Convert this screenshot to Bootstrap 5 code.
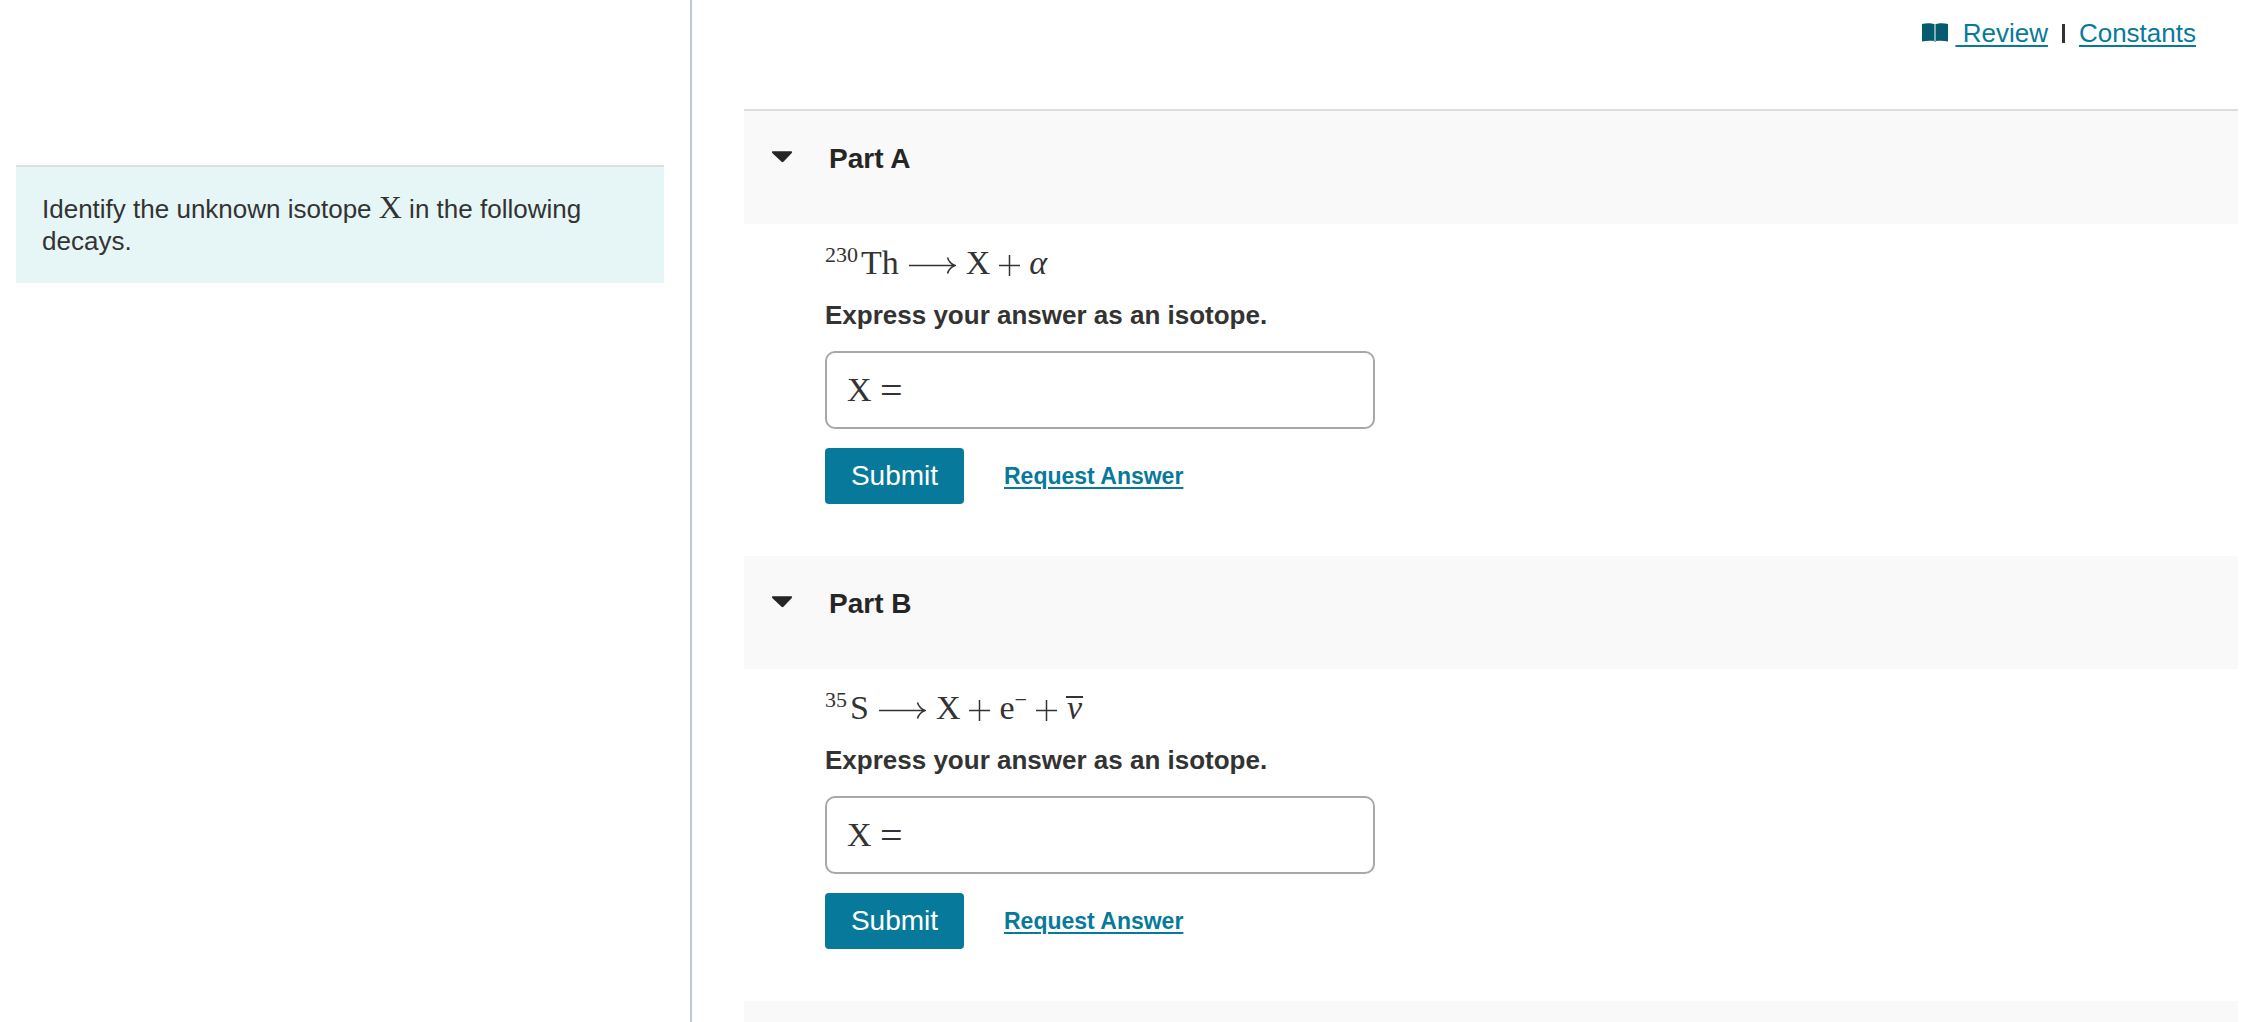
<!DOCTYPE html>
<html lang="en">
<head>
<meta charset="utf-8">
<meta name="viewport" content="width=device-width, initial-scale=1">
<title>Unknown isotope decays</title>
<link href="https://cdn.jsdelivr.net/npm/bootstrap@5.3.0/dist/css/bootstrap.min.css" rel="stylesheet">
<style>
  body { font-family: "Liberation Sans", Arial, sans-serif; font-size: 26px; line-height: 32px; color: #333; background: #fff; }
  a { color: #077a9c; text-decoration-thickness: 2px; text-underline-offset: 3px; }
  .intro-pane { flex: 0 0 692px; border-right: 2px solid #b9c8de; padding: 165px 26px 0 16px; }
  .intro-box { background: #e6f6f6; border-top: 2px solid #dcdfdf; padding: 26px; }
  .work-pane { padding: 0 12px 0 52px; }
  .top-links { height: 109px; padding: 17px 42px 0 0; }
  .book-icon { width: 26px; height: 20px; margin-right: 7px; }
  .link-bar { width: 3px; height: 19px; background: #333; margin: 0 14px; }
  .part-head { background: #f9f9f9; height: 113px; padding: 30px 28px 0; gap: 35px; color: #252525; }
  .first-head { border-top: 2px solid #ddd; height: 115px; }
  .caret { width: 21px; height: 12px; margin-top: 10px; margin-right: 1px; }
  .part-title { font-size: 28px; line-height: 36px; }
  .part-body { padding: 23px 0 52px 81px; }
  .formula { font-family: "Liberation Serif", "Times New Roman", serif; font-size: 34px; line-height: 32px; white-space: nowrap; }
  .intro-box .formula { font-size: 32px; line-height: 1px; }
  .formula sup { font-size: 22px; line-height: 0; top: 0; vertical-align: 12px; }
  .pre-sup { margin-right: 3px; }
  .arrow { width: 47px; height: 17px; margin: 0 10px; vertical-align: 0; }
  .plus { width: 21px; height: 21px; margin: 0 9px; vertical-align: -2px; }
  .equals { font-size: 40px; line-height: 0; vertical-align: -3px; }
  .bar-over { display: inline-block; border-top: 2px solid #333; line-height: 20px; height: 22px; padding: 0 1px; }
  .prompt { margin-top: 20px; line-height: 32px; }
  .answer-box { max-width: 550px; height: 78px; border: 2px solid #a8a8a8; border-radius: 10px; margin-top: 20px; padding: 0 20px; }
  .answer-box input { border: 0; outline: 0; background: transparent; font-size: 26px; min-width: 0; }
  .actions { margin-top: 19px; gap: 40px; }
  .btn-send { background: #077a9c; color: #fff; border: 0; border-radius: 4px; font-size: 28px; line-height: 32px; width: 139px; height: 56px; padding: 0; }
  .btn-send:hover { background: #055f7a; color: #fff; }
  .ask-link { font-size: 23px; font-weight: 700; }
  .next-head { min-height: 20px; background: #f9f9f9; }
</style>
</head>
<body>
<div class="d-flex min-vh-100">
  <aside class="intro-pane">
    <div class="intro-box">Identify the unknown isotope <span class="formula">X</span> in the following decays.</div>
  </aside>

  <main class="work-pane flex-fill d-flex flex-column">
    <nav class="top-links d-flex justify-content-end align-items-start" aria-label="Resources">
      <div class="d-flex align-items-center">
        <svg class="book-icon" viewBox="0 0 26 20" aria-hidden="true">
          <path fill="#045a6e" d="M0 1C4 0 9 0 12 1V18C9 17.500 4 17.500 0 18.500ZM14 1C17 0 22 0 26 1V18.500C22 17.500 17 17.500 14 18Z"/>
          <path fill="#7fb0bc" d="M12 1h2v17.500l-1 1-1-1z"/>
        </svg>
        <a href="#review">&nbsp;Review</a>
        <span class="link-bar"></span>
        <a href="#constants">Constants</a>
      </div>
    </nav>

    <section>
      <header class="part-head first-head d-flex align-items-start">
        <svg class="caret" viewBox="0 0 22 12" aria-hidden="true"><path fill="#252525" d="M1 0H20Q22 0 20.500 2L12 11Q11 12 10 11L.5 2Q-1 0 1 0Z"/></svg>
        <h2 class="part-title fw-bold m-0">Part A</h2>
      </header>
      <div class="part-body">
        <div class="formula"><sup class="pre-sup">230</sup>Th<svg class="arrow" viewBox="0 0 47 17" role="img" aria-label="decays to"><path d="M0 8.500H45M38.500 .5Q40 6 46 8.500Q40 11 38.500 16.500" fill="none" stroke="#333" stroke-width="1.500"/></svg>X<svg class="plus" viewBox="0 0 21 21" role="img" aria-label="plus"><path d="M0 10.500H21M10.500 0V21" stroke="#333" stroke-width="1.500"/></svg><i>α</i></div>
        <div class="prompt fw-bold">Express your answer as an isotope.</div>
        <div class="answer-box d-flex align-items-center">
          <label class="formula" for="answer-a">X <span class="equals">=</span></label>
          <input class="flex-fill" id="answer-a" type="text" autocomplete="off">
        </div>
        <div class="actions d-flex align-items-center">
          <button class="btn btn-send" type="button">Submit</button>
          <a class="ask-link" href="#request-a">Request Answer</a>
        </div>
      </div>
    </section>

    <section>
      <header class="part-head d-flex align-items-start">
        <svg class="caret" viewBox="0 0 22 12" aria-hidden="true"><path fill="#252525" d="M1 0H20Q22 0 20.500 2L12 11Q11 12 10 11L.5 2Q-1 0 1 0Z"/></svg>
        <h2 class="part-title fw-bold m-0">Part B</h2>
      </header>
      <div class="part-body">
        <div class="formula"><sup class="pre-sup">35</sup>S<svg class="arrow" viewBox="0 0 47 17" role="img" aria-label="decays to"><path d="M0 8.500H45M38.500 .5Q40 6 46 8.500Q40 11 38.500 16.500" fill="none" stroke="#333" stroke-width="1.500"/></svg>X<svg class="plus" viewBox="0 0 21 21" role="img" aria-label="plus"><path d="M0 10.500H21M10.500 0V21" stroke="#333" stroke-width="1.500"/></svg>e<sup>−</sup><svg class="plus" viewBox="0 0 21 21" role="img" aria-label="plus"><path d="M0 10.500H21M10.500 0V21" stroke="#333" stroke-width="1.500"/></svg><i class="bar-over">ν</i></div>
        <div class="prompt fw-bold">Express your answer as an isotope.</div>
        <div class="answer-box d-flex align-items-center">
          <label class="formula" for="answer-b">X <span class="equals">=</span></label>
          <input class="flex-fill" id="answer-b" type="text" autocomplete="off">
        </div>
        <div class="actions d-flex align-items-center">
          <button class="btn btn-send" type="button">Submit</button>
          <a class="ask-link" href="#request-b">Request Answer</a>
        </div>
      </div>
    </section>

    <div class="next-head flex-fill"></div>
  </main>
</div>
<script src="https://cdn.jsdelivr.net/npm/bootstrap@5.3.0/dist/js/bootstrap.bundle.min.js"></script>
</body>
</html>
